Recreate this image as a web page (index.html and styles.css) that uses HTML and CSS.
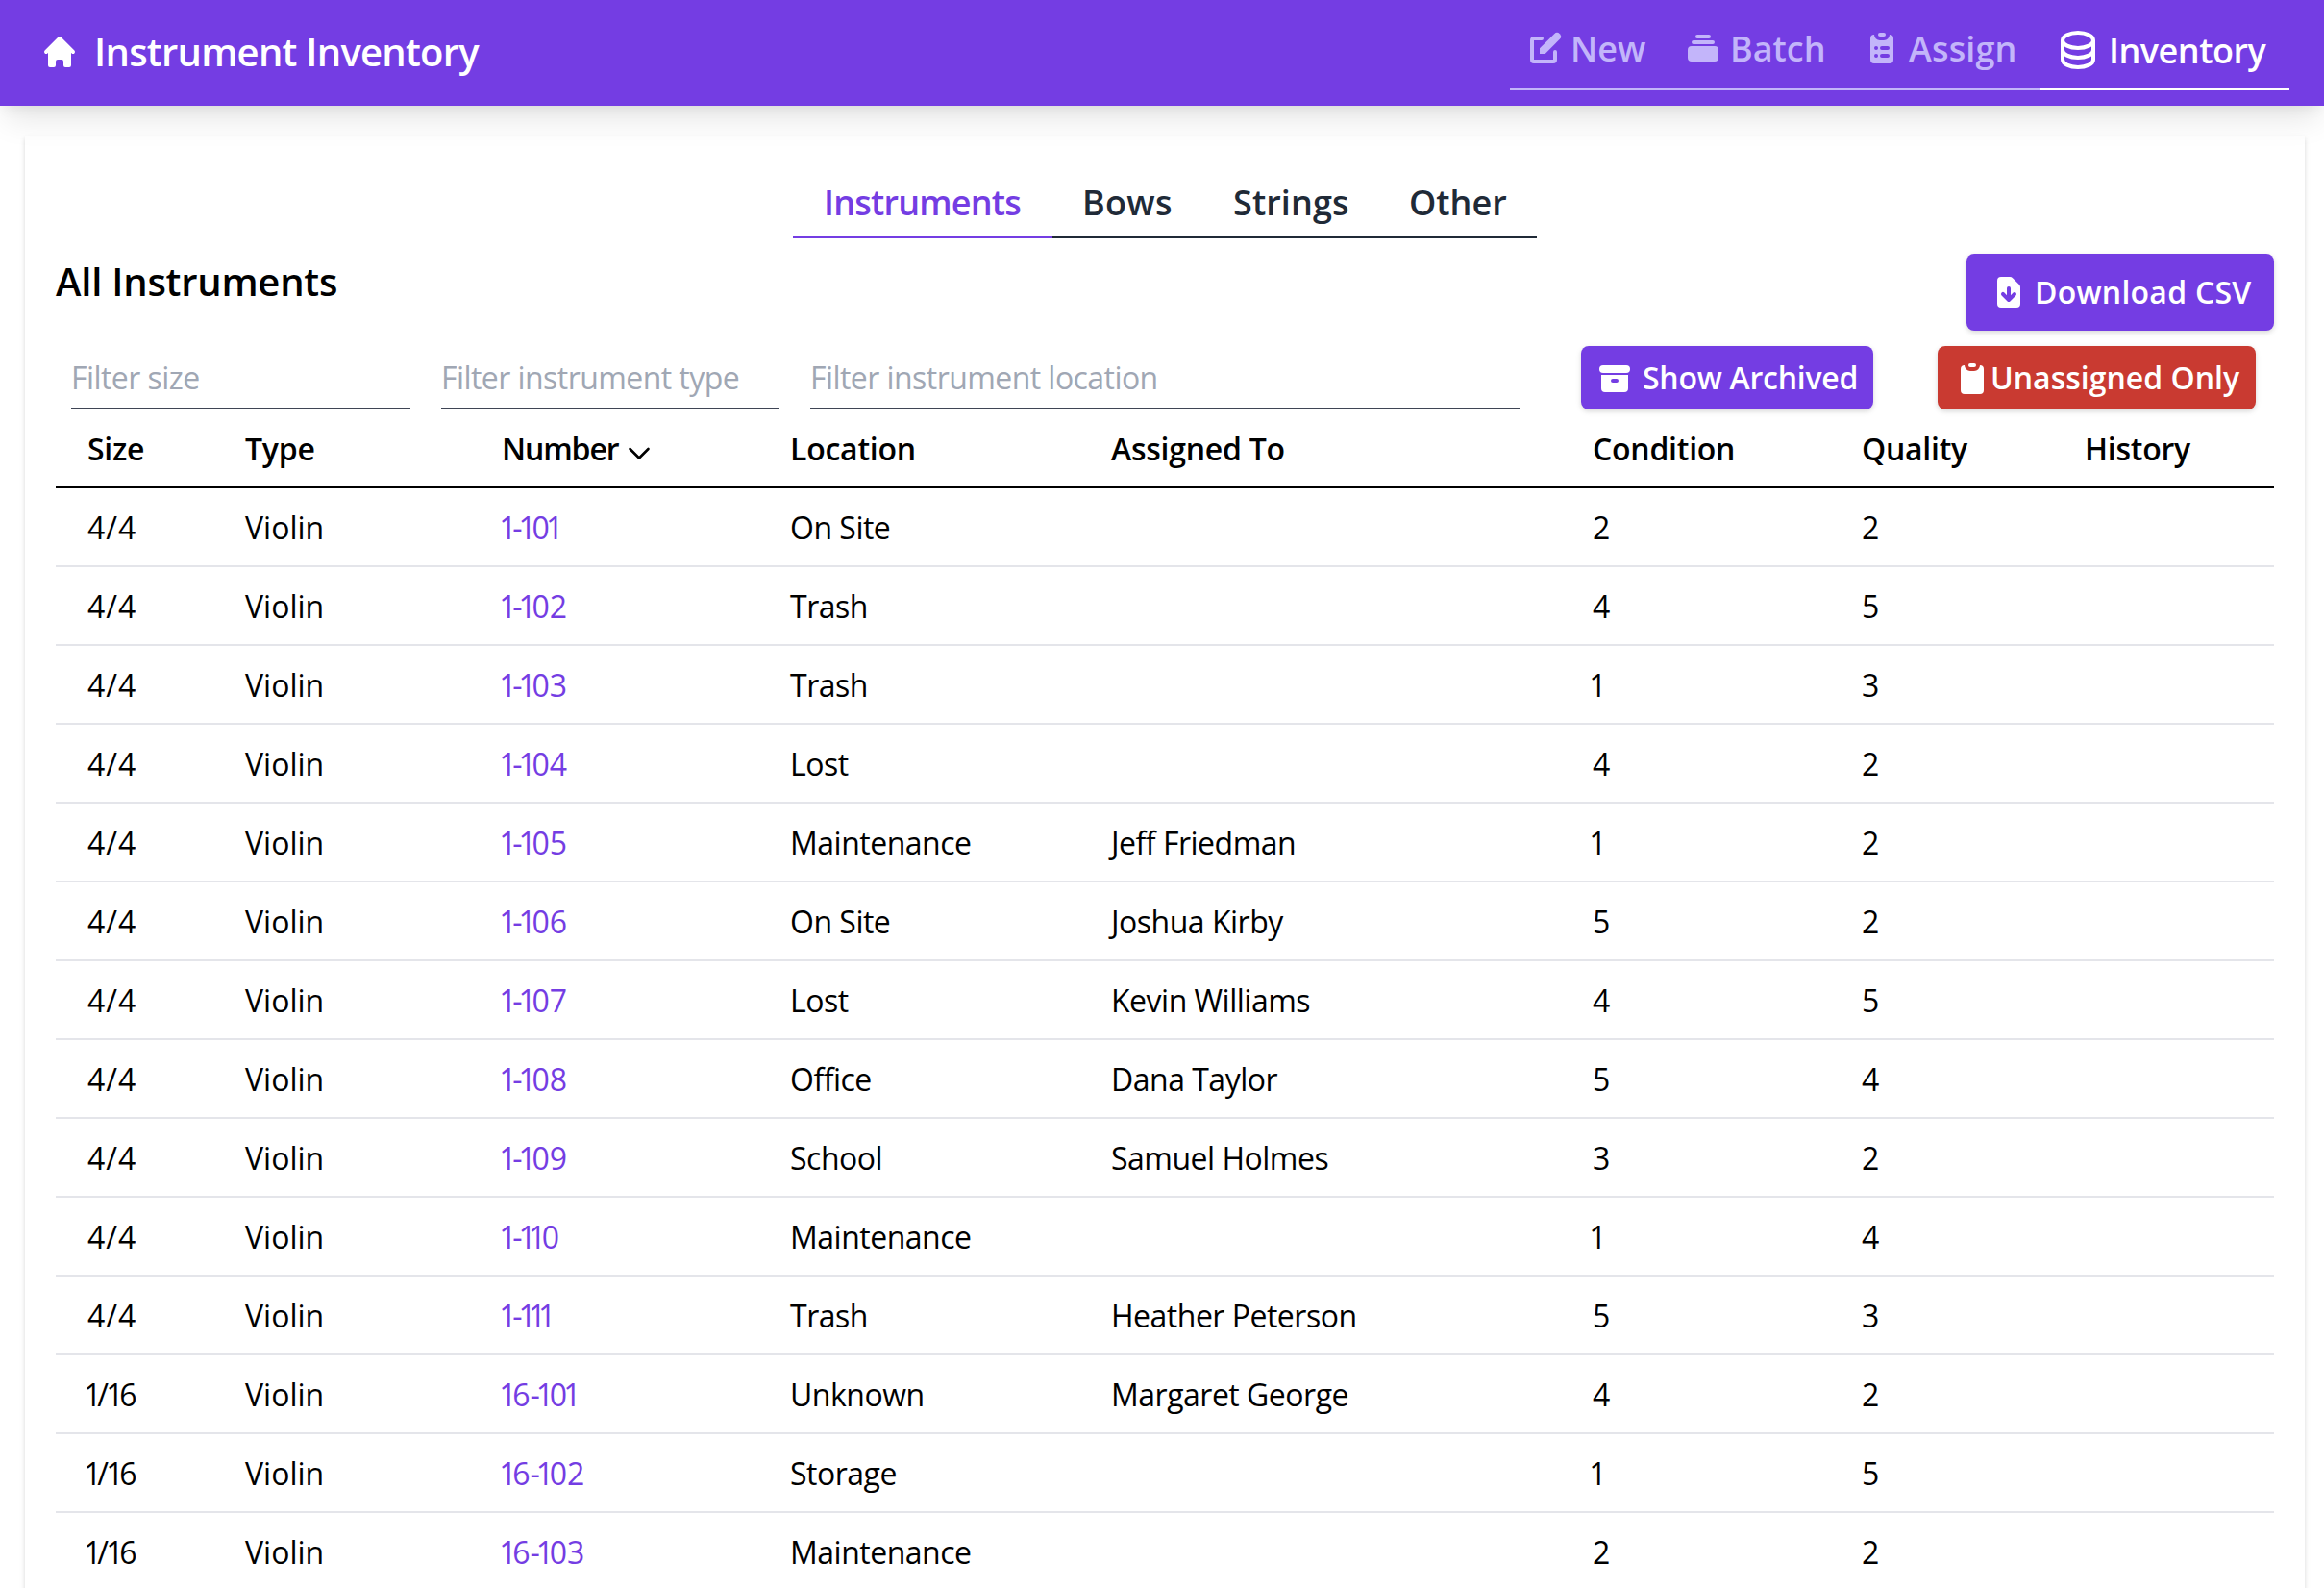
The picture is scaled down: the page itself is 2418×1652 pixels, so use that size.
FILE: index.html
```
<!DOCTYPE html>
<html lang="en">
<head>
<meta charset="utf-8">
<title>Instrument Inventory</title>
<link rel="stylesheet" href="styles.css">
</head>
<body>
<header class="topbar">
  <div class="brand">
    <svg class="icon" viewBox="0 0 20 20"><path d="M10.707 2.293a1 1 0 00-1.414 0l-7 7a1 1 0 001.414 1.414L4 10.414V17a1 1 0 001 1h2a1 1 0 001-1v-2a1 1 0 011-1h2a1 1 0 011 1v2a1 1 0 001 1h2a1 1 0 001-1v-6.586l.293.293a1 1 0 001.414-1.414l-7-7z"/></svg>
    <span class="brand-name">Instrument Inventory</span>
  </div>
  <nav class="nav">
    <a class="nav-item nav-new"><svg class="icon" viewBox="0 0 20 20"><path d="M17.414 2.586a2 2 0 00-2.828 0L7 10.172V13h2.828l7.586-7.586a2 2 0 000-2.828z"/><path fill-rule="evenodd" d="M2 6a2 2 0 012-2h4a1 1 0 010 2H4v10h10v-4a1 1 0 112 0v4a2 2 0 01-2 2H4a2 2 0 01-2-2V6z"/></svg><span>New</span></a>
    <a class="nav-item nav-batch"><svg class="icon" viewBox="0 0 20 20"><path d="M7 3a1 1 0 000 2h6a1 1 0 100-2H7zM4 7a1 1 0 011-1h10a1 1 0 110 2H5a1 1 0 01-1-1zM2 11a2 2 0 012-2h12a2 2 0 012 2v4a2 2 0 01-2 2H4a2 2 0 01-2-2v-4z"/></svg><span>Batch</span></a>
    <a class="nav-item nav-assign"><svg class="icon" viewBox="0 0 20 20"><path d="M9 2a1 1 0 000 2h2a1 1 0 100-2H9z"/><path fill-rule="evenodd" d="M4 5a2 2 0 012-2 3 3 0 003 3h2a3 3 0 003-3 2 2 0 012 2v11a2 2 0 01-2 2H6a2 2 0 01-2-2V5zm3 4a1 1 0 000 2h.01a1 1 0 100-2H7zm3 0a1 1 0 000 2h3a1 1 0 100-2h-3zm-3 4a1 1 0 100 2h.01a1 1 0 100-2H7zm3 0a1 1 0 100 2h3a1 1 0 100-2h-3z"/></svg><span>Assign</span></a>
    <a class="nav-item nav-inventory"><svg class="icon-outline" viewBox="0 0 24 24"><path d="M4 7v10c0 2.21 3.582 4 8 4s8-1.79 8-4V7M4 7c0 2.21 3.582 4 8 4s8-1.79 8-4M4 7c0-2.21 3.582-4 8-4s8 1.79 8 4m0 5c0 2.21-3.582 4-8 4s-8-1.79-8-4"/></svg><span>Inventory</span></a>
  </nav>
</header>
<main class="card">
  <div class="tabs">
    <a class="tab tab-instruments">Instruments</a>
    <a class="tab tab-bows">Bows</a>
    <a class="tab tab-strings">Strings</a>
    <a class="tab tab-other">Other</a>
  </div>
  <div class="heading">
    <h2>All Instruments</h2>
    <button class="btn btn-download"><svg class="icon" viewBox="0 0 20 20"><path fill-rule="evenodd" d="M6 2a2 2 0 00-2 2v12a2 2 0 002 2h8a2 2 0 002-2V7.414A2 2 0 0015.414 6L12 2.586A2 2 0 0010.586 2H6zm5 6a1 1 0 10-2 0v3.586l-1.293-1.293a1 1 0 10-1.414 1.414l3 3a1 1 0 001.414 0l3-3a1 1 0 00-1.414-1.414L11 11.586V8z"/></svg><span>Download CSV</span></button>
  </div>
  <div class="filters">
    <input placeholder="Filter size">
    <input placeholder="Filter instrument type">
    <input placeholder="Filter instrument location">
    <button class="btn btn-archived"><svg class="icon" viewBox="0 0 20 20"><path d="M4 3a2 2 0 100 4h12a2 2 0 100-4H4z"/><path fill-rule="evenodd" d="M3 8h14v7a2 2 0 01-2 2H5a2 2 0 01-2-2V8zm5 3a1 1 0 011-1h2a1 1 0 110 2H9a1 1 0 01-1-1z"/></svg><span>Show Archived</span></button>
    <button class="btn btn-unassigned"><svg class="icon" viewBox="0 0 20 20"><path d="M8 3a1 1 0 011-1h2a1 1 0 110 2H9a1 1 0 01-1-1z"/><path d="M6 3a2 2 0 00-2 2v11a2 2 0 002 2h8a2 2 0 002-2V5a2 2 0 00-2-2 3 3 0 01-3 3H9a3 3 0 01-3-3z"/></svg><span>Unassigned Only</span></button>
  </div>
  <table class="list">
    <colgroup><col class="c-size"><col class="c-type"><col class="c-number"><col class="c-location"><col class="c-assigned"><col class="c-condition"><col class="c-quality"><col class="c-history"></colgroup>
    <thead>
      <tr><th>Size</th><th>Type</th><th class="th-number">Number<svg class="chevron" viewBox="0 0 24 14"><path d="M2.500 2L12 11.500L21.500 2"/></svg></th><th>Location</th><th>Assigned To</th><th>Condition</th><th>Quality</th><th>History</th></tr>
    </thead>
    <tbody>
      <tr><td>4/4</td><td>Violin</td><td><i>1</i>-<i>1</i>0<i>1</i></td><td>On Site</td><td></td><td>2</td><td>2</td><td></td></tr>
      <tr><td>4/4</td><td>Violin</td><td><i>1</i>-<i>1</i>02</td><td>Trash</td><td></td><td>4</td><td>5</td><td></td></tr>
      <tr><td>4/4</td><td>Violin</td><td><i>1</i>-<i>1</i>03</td><td>Trash</td><td></td><td><i>1</i></td><td>3</td><td></td></tr>
      <tr><td>4/4</td><td>Violin</td><td><i>1</i>-<i>1</i>04</td><td>Lost</td><td></td><td>4</td><td>2</td><td></td></tr>
      <tr><td>4/4</td><td>Violin</td><td><i>1</i>-<i>1</i>05</td><td>Maintenance</td><td>Jeff Friedman</td><td><i>1</i></td><td>2</td><td></td></tr>
      <tr><td>4/4</td><td>Violin</td><td><i>1</i>-<i>1</i>06</td><td>On Site</td><td>Joshua Kirby</td><td>5</td><td>2</td><td></td></tr>
      <tr><td>4/4</td><td>Violin</td><td><i>1</i>-<i>1</i>07</td><td>Lost</td><td>Kevin Williams</td><td>4</td><td>5</td><td></td></tr>
      <tr><td>4/4</td><td>Violin</td><td><i>1</i>-<i>1</i>08</td><td>Office</td><td>Dana Taylor</td><td>5</td><td>4</td><td></td></tr>
      <tr><td>4/4</td><td>Violin</td><td><i>1</i>-<i>1</i>09</td><td>School</td><td>Samuel Holmes</td><td>3</td><td>2</td><td></td></tr>
      <tr><td>4/4</td><td>Violin</td><td><i>1</i>-<i>11</i>0</td><td>Maintenance</td><td></td><td><i>1</i></td><td>4</td><td></td></tr>
      <tr><td>4/4</td><td>Violin</td><td><i>1</i>-<i>111</i></td><td>Trash</td><td>Heather Peterson</td><td>5</td><td>3</td><td></td></tr>
      <tr><td><i>1</i>/<i>1</i>6</td><td>Violin</td><td><i>1</i>6-<i>1</i>0<i>1</i></td><td>Unknown</td><td>Margaret George</td><td>4</td><td>2</td><td></td></tr>
      <tr><td><i>1</i>/<i>1</i>6</td><td>Violin</td><td><i>1</i>6-<i>1</i>02</td><td>Storage</td><td></td><td><i>1</i></td><td>5</td><td></td></tr>
      <tr><td><i>1</i>/<i>1</i>6</td><td>Violin</td><td><i>1</i>6-<i>1</i>03</td><td>Maintenance</td><td></td><td>2</td><td>2</td><td></td></tr>
    </tbody>
  </table>
</main>
</body>
</html>
```
FILE: styles.css
```
*{box-sizing:border-box}
html,body{height:100%}
body{margin:0;overflow:hidden;background:#fff;color:#000;font-family:"Open Sans","Noto Sans",sans-serif;font-size:32px}
.icon{width:40px;height:40px;fill:currentColor;flex:none}
.icon-outline{width:48px;height:48px;fill:none;stroke:currentColor;stroke-width:2;flex:none}

/* Top bar */
.topbar{position:relative;z-index:1;height:110px;display:flex;justify-content:space-between;padding:0 36px 0 42px;background:#743de3;color:#fff;box-shadow:0 20px 30px -6px rgba(0,0,0,.1),0 8px 12px -4px rgba(0,0,0,.05)}
.brand{display:flex;align-items:center;gap:16px;padding-bottom:2px}
.brand-name{font-size:40px;font-weight:600;letter-spacing:-.74px;line-height:56px}
.nav{display:flex;height:94px;font-size:36px;font-weight:600}
.nav-item{display:flex;align-items:center;gap:6px;padding:8px 0 0 16px;border-bottom:2px solid #c3b5fa;color:#c3b5fa;white-space:nowrap}
.nav-new{width:165px;padding-left:17px}
.nav-batch{width:186px;gap:8px}
.nav-assign{width:201px;gap:8px;letter-spacing:.15px}
.nav-inventory{width:259px;gap:8px;padding:12px 0 0 15px;color:#fff;border-color:#fff;letter-spacing:-.5px}

/* Card */
.card{margin:32px 20px 0 26px;padding:32px;background:#fff;box-shadow:0 2px 6px rgba(0,0,0,.1),0 2px 4px rgba(0,0,0,.06)}
.tabs{display:flex;width:774px;margin:0 auto;height:74px;font-size:36px;font-weight:600;line-height:74px;color:#202a37}
.tab{padding-left:31px;border-bottom:2px solid #202a37;white-space:nowrap}
.tab-instruments{width:270px;padding-left:32px;color:#743de3;border-color:#743de3;letter-spacing:-.8px}
.tab-bows{width:156px;letter-spacing:.3px}
.tab-strings{width:184px;padding-left:32px;letter-spacing:.1px}
.tab-other{width:164px}
.heading{display:flex;justify-content:space-between;align-items:flex-start;height:80px;margin-top:16px}
h2{margin:0;font-size:40px;font-weight:600;line-height:58px;letter-spacing:-.23px}

/* Buttons */
.btn{display:flex;align-items:center;height:66px;padding:0;border:0;border-radius:8px;background:#743de3;color:#fff;font:600 32px/48px "Open Sans","Noto Sans",sans-serif;white-space:nowrap;box-shadow:0 2px 6px rgba(0,0,0,.1),0 2px 4px rgba(0,0,0,.06)}
.btn-download{width:320px;height:80px;padding-left:24px;gap:7px;letter-spacing:.25px}
.btn-archived{width:304px;margin-left:32px;padding-left:15px;gap:9px;letter-spacing:-.25px}
.btn-unassigned{width:331px;margin-left:67px;padding-left:16px;background:#c93a31}
.btn-unassigned span{margin-left:-1px}
.filters .icon{margin-top:2px}

/* Filters */
.filters{display:grid;grid-template-columns:353px 352px 738px 304px 331px;column-gap:32px;height:66px;margin-top:16px;padding-left:16px}
input{min-width:0;width:100%;height:66px;padding:1px 0 0;border:0;border-bottom:2px solid #3f4555;border-radius:0;background:none;font:32px "Open Sans","Noto Sans",sans-serif;letter-spacing:-.56px}
input::placeholder{color:#a0a7b4;opacity:1}

/* Table */
.list{width:2308px;border-collapse:separate;border-spacing:0;table-layout:fixed}
.c-size{width:164px}
.c-type{width:267px}
.c-number{width:301px}
.c-location{width:333px}
.c-assigned{width:501px}
.c-condition{width:280px}
.c-quality{width:232px}
.c-history{width:230px}
th,td{height:82px;padding:1px 0 0 33px;text-align:left;line-height:48px;white-space:nowrap;vertical-align:middle}
th{font-weight:600;letter-spacing:-.25px;border-bottom:2px solid #000}
td{border-bottom:2px solid #e4e5ea;letter-spacing:-.5px}
td:nth-child(1){letter-spacing:1px}
td:nth-child(2){letter-spacing:0}
td:nth-child(3){padding-left:34px;letter-spacing:-.1px;color:#743de3}
th:nth-child(4),td:nth-child(4){padding-left:32px}
.th-number{letter-spacing:-1.1px}
.chevron{width:24px;height:14px;margin-left:9px;fill:none;stroke:#000;stroke-width:2.6;stroke-linecap:round;stroke-linejoin:round}

/* The digit one is set narrower than the tabular figures */
i{font-style:normal;letter-spacing:-8.1px;margin:0 3.8px 0 -3.8px}
```
